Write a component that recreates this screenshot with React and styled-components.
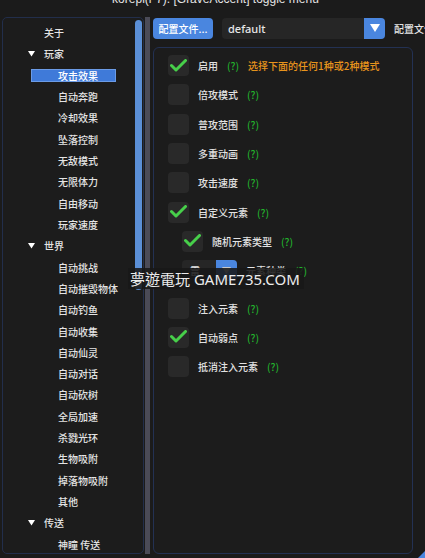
import React from "react";
import styled, { createGlobalStyle } from "styled-components";

const GlobalStyle = createGlobalStyle`
  html, body {
    margin: 0;
    padding: 0;
    background: #1b1b1b;
  }
  * {
    box-sizing: border-box;
  }
`;

const cjk = `"Noto Sans CJK SC", "Noto Sans", sans-serif`;

const Window = styled.div`
  position: relative;
  width: 425px;
  height: 558px;
  overflow: hidden;
  background: #1b1b1b;
  display: flex;
  flex-direction: column;
  font-family: ${cjk};
  font-weight: 500;
  color: #e2e2e2;
`;

const TitleBar = styled.div`
  height: 17px;
  flex: none;
  overflow: hidden;
  display: flex;
  justify-content: center;
`;

const TitleText = styled.div`
  margin-top: -9px;
  margin-left: 6px;
  font-family: "Liberation Sans", sans-serif;
  font-weight: 400;
  font-size: 12px;
  line-height: 16px;
  color: #e4e4e4;
  white-space: nowrap;
`;

const Main = styled.div`
  flex: 1;
  display: flex;
  padding: 0 0 4px 2px;
  min-height: 0;
`;

const SidePanel = styled.div`
  width: 142px;
  flex: none;
  display: flex;
  border: 1px solid #222e4b;
  border-radius: 5px;
  background: #1c1c1c;
  overflow: hidden;
`;

const Tree = styled.div`
  flex: 1;
  padding-top: 4px;
  overflow: hidden;
`;

const TreeRow = styled.div`
  height: 21.32px;
  display: flex;
  align-items: center;
  padding-left: ${(p) => p.$pad}px;
  font-size: 10px;
  white-space: nowrap;
  color: #e4e4e4;
`;

const Arrow = styled.span`
  width: 16px;
  flex: none;
  display: flex;
  align-items: center;
  svg {
    display: block;
  }
`;

const Leaf = styled.span`
  margin-left: 28px;
  width: 85px;
  height: 13px;
  padding-left: 26px;
  display: flex;
  align-items: center;
  border: 1px solid ${(p) => (p.$selected ? "#6b9be6" : "transparent")};
  background: ${(p) => (p.$selected ? "#3f7ad9" : "transparent")};
  color: ${(p) => (p.$selected ? "#ffffff" : "#e4e4e4")};
`;

const ScrollTrack = styled.div`
  width: 7px;
  flex: none;
  margin: 2px 1px 0 0;
`;

const ScrollThumb = styled.div`
  width: 7px;
  height: 270px;
  border-radius: 4px;
  background: #5b8fd6;
`;

const Splitter = styled.div`
  width: 5px;
  flex: none;
  margin-left: 1px;
  margin-right: 3px;
  background: #4b4b57;
`;

const RightColumn = styled.div`
  flex: 1;
  display: flex;
  flex-direction: column;
  gap: 8px;
  min-width: 0;
`;

const Toolbar = styled.div`
  height: 22px;
  flex: none;
  display: flex;
  align-items: center;
  gap: 9px;
  white-space: nowrap;
`;

const BlueButton = styled.div`
  width: 60px;
  height: 21px;
  border-radius: 4px;
  background: #4a86df;
  color: #ffffff;
  font-size: 10px;
  display: flex;
  align-items: center;
  justify-content: center;
  flex: none;
`;

const Combo = styled.div`
  width: ${(p) => p.$width}px;
  height: 21px;
  flex: none;
  display: flex;
  border-radius: 4px;
  background: #262626;
  overflow: hidden;
`;

const ComboValue = styled.div`
  flex: 1;
  display: flex;
  align-items: center;
  padding-left: ${(p) => p.$pad}px;
  font-family: ${(p) => (p.$latin ? `"Noto Sans", sans-serif` : cjk)};
  font-size: ${(p) => (p.$latin ? 11 : 10)}px;
  color: #e8e8e8;
`;

const ComboArrow = styled.div`
  width: 21px;
  flex: none;
  background: #4a86df;
  display: flex;
  align-items: center;
  justify-content: center;
`;

const ToolbarLabel = styled.span`
  font-size: 10px;
  color: #e4e4e4;
`;

const ContentPanel = styled.div`
  flex: 1;
  margin-right: 12px;
  border: 1px solid #233153;
  border-radius: 6px;
  background: #1c1c1c;
  padding: 7px 14px;
  display: flex;
  flex-direction: column;
  gap: 8.33px;
`;

const OptionRow = styled.div`
  height: 21px;
  display: flex;
  align-items: center;
  padding-left: ${(p) => (p.$indent ? 14 : 0)}px;
  margin-bottom: ${(p) => (p.$extra ? 8 : 0)}px;
  gap: 9px;
  font-size: 10px;
  white-space: nowrap;
`;

const Box = styled.div`
  width: 21px;
  height: 21px;
  flex: none;
  border-radius: 4px;
  background: #292929;
  display: flex;
  align-items: center;
  justify-content: center;
`;

const Label = styled.span`
  color: #e2e2e2;
`;

const Help = styled.span`
  color: #22b02c;
`;

const Note = styled.span`
  color: #e8941c;
`;

const Watermark = styled.div`
  position: absolute;
  left: 128px;
  top: 268px;
  height: 21px;
  padding: 0 4px 0 2px;
  display: flex;
  align-items: center;
  background: rgba(24, 24, 24, 0.88);
  color: #ececec;
  font-family: "Noto Sans", "Noto Sans CJK TC", sans-serif;
  font-weight: 400;
  font-size: 15px;
  white-space: nowrap;
`;

const Grip = styled.div`
  position: absolute;
  right: 0;
  bottom: 0;
  width: 0;
  height: 0;
  border-left: 7px solid transparent;
  border-bottom: 7px solid #4a86df;
`;

const Tri = ({ size = 7, color = "#ffffff" }) => (
  <svg width={size} height={size * 0.8} viewBox="0 0 10 8">
    <path d="M0 0 L10 0 L5 8 Z" fill={color} />
  </svg>
);

const Check = () => (
  <svg width="17" height="14" viewBox="0 0 17 14">
    <path
      d="M1.5 6.5 L6 11 L15.5 1.5"
      fill="none"
      stroke="#47cf4a"
      strokeWidth="3"
      strokeLinecap="round"
      strokeLinejoin="round"
    />
  </svg>
);

const tree = [
  { label: "关于", level: 0 },
  { label: "玩家", level: 0, open: true },
  { label: "攻击效果", level: 1, selected: true },
  { label: "自动奔跑", level: 1 },
  { label: "冷却效果", level: 1 },
  { label: "坠落控制", level: 1 },
  { label: "无敌模式", level: 1 },
  { label: "无限体力", level: 1 },
  { label: "自由移动", level: 1 },
  { label: "玩家速度", level: 1 },
  { label: "世界", level: 0, open: true },
  { label: "自动挑战", level: 1 },
  { label: "自动摧毁物体", level: 1 },
  { label: "自动钓鱼", level: 1 },
  { label: "自动收集", level: 1 },
  { label: "自动仙灵", level: 1 },
  { label: "自动对话", level: 1 },
  { label: "自动砍树", level: 1 },
  { label: "全局加速", level: 1 },
  { label: "杀戮光环", level: 1 },
  { label: "生物吸附", level: 1 },
  { label: "掉落物吸附", level: 1 },
  { label: "其他", level: 1 },
  { label: "传送", level: 0, open: true },
  { label: "神瞳 传送", level: 1 },
];

const options = [
  { label: "启用", checked: true, note: "选择下面的任何1种或2种模式" },
  { label: "倍攻模式" },
  { label: "普攻范围" },
  { label: "多重动画" },
  { label: "攻击速度" },
  { label: "自定义元素", checked: true },
  { label: "随机元素类型", checked: true, indent: true },
  { combo: "雷", label: "元素种类", indent: true },
  { label: "注入元素" },
  { label: "自动弱点", checked: true },
  { label: "抵消注入元素" },
];

const TreeItem = ({ item }) => {
  if (item.level === 1) {
    return (
      <TreeRow $pad={0}>
        <Leaf $selected={item.selected}>{item.label}</Leaf>
      </TreeRow>
    );
  }
  if (item.open) {
    return (
      <TreeRow $pad={25}>
        <Arrow>
          <Tri size={7} />
        </Arrow>
        {item.label}
      </TreeRow>
    );
  }
  return <TreeRow $pad={41}>{item.label}</TreeRow>;
};

const Option = ({ opt }) => {
  if (opt.combo) {
    return (
      <OptionRow $indent $extra>
        <Combo $width={55}>
          <ComboValue $pad={8}>{opt.combo}</ComboValue>
          <ComboArrow>
            <Tri size={9} color="#c8c8c8" />
          </ComboArrow>
        </Combo>
        <Label>{opt.label}</Label>
        <Help>(?)</Help>
      </OptionRow>
    );
  }
  return (
    <OptionRow $indent={opt.indent}>
      <Box>{opt.checked && <Check />}</Box>
      <Label>{opt.label}</Label>
      <Help>(?)</Help>
      {opt.note && <Note>{opt.note}</Note>}
    </OptionRow>
  );
};

export default function App() {
  return (
    <>
      <GlobalStyle />
      <Window>
        <TitleBar>
          <TitleText>korepi(r 7). [GraveAccent] toggle menu</TitleText>
        </TitleBar>
        <Main>
          <SidePanel>
            <Tree>
              {tree.map((item, i) => (
                <TreeItem key={i} item={item} />
              ))}
            </Tree>
            <ScrollTrack>
              <ScrollThumb />
            </ScrollTrack>
          </SidePanel>
          <Splitter />
          <RightColumn>
            <Toolbar>
              <BlueButton>配置文件...</BlueButton>
              <Combo $width={163}>
                <ComboValue $pad={6} $latin>
                  default
                </ComboValue>
                <ComboArrow>
                  <Tri size={10} />
                </ComboArrow>
              </Combo>
              <ToolbarLabel>配置文件</ToolbarLabel>
            </Toolbar>
            <ContentPanel>
              {options.map((opt, i) => (
                <Option key={i} opt={opt} />
              ))}
            </ContentPanel>
          </RightColumn>
        </Main>
        <Watermark>夢遊電玩 GAME735.COM</Watermark>
        <Grip />
      </Window>
    </>
  );
}
